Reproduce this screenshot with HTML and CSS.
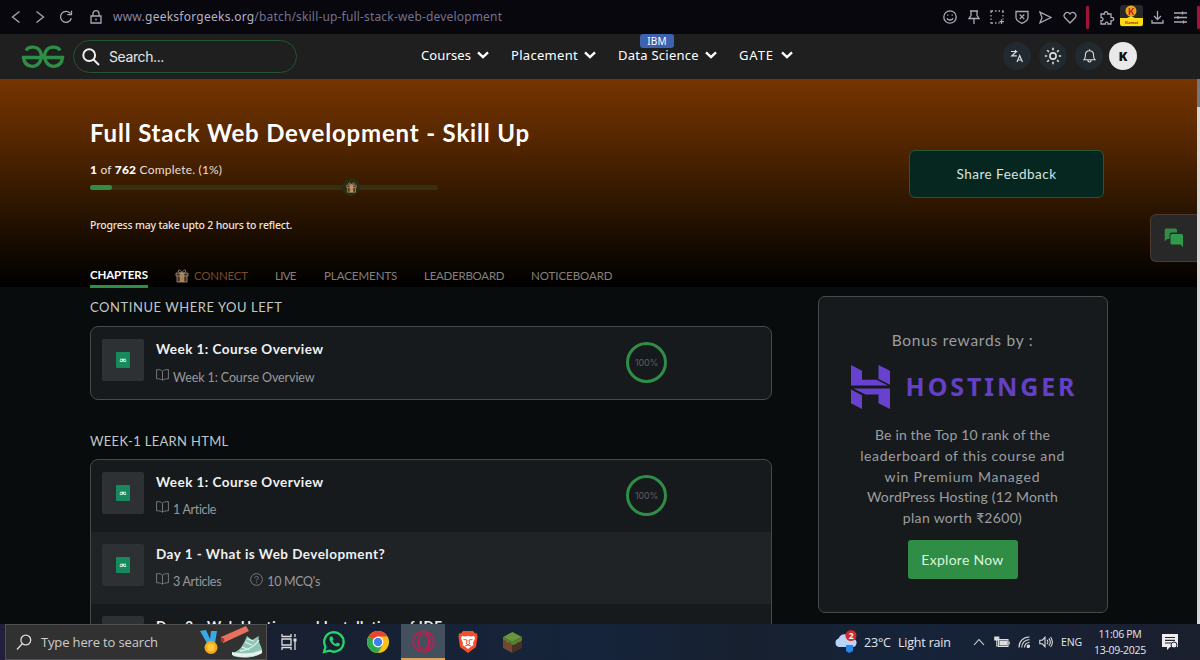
FILE: index.html
```html
<!DOCTYPE html>
<html lang="en">
<head>
<meta charset="utf-8">
<title>Full Stack Web Development - Skill Up</title>
<link rel="stylesheet" href="styles.css">
</head>
<body>
<svg width="0" height="0" class="defs" aria-hidden="true">
  <defs>
    <symbol id="chev" viewBox="0 0 12 8"><path d="M1 1.300 6 6l5-4.700" fill="none" stroke="#fff" stroke-width="2.400"/></symbol>
    <symbol id="book" viewBox="0 0 13 12"><path d="M6.500 2.200C5.500 1 3.500.6.600.6v9.200c2.900 0 4.900.3 5.900 1.500 1-1.200 3-1.500 5.900-1.500V.6C9.500.6 7.500 1 6.500 2.200zv9" fill="none" stroke="#74787a" stroke-width="1"/></symbol>
    <symbol id="gift" viewBox="0 0 14 14"><path d="M1 4h12v3H1zM2 7h10v6H2z" fill="#4a3522"/><path d="M5.200 4h3.600v9H5.200z" fill="#c98b4a"/><path d="M1 4h12v3H1zM2 7v6h10V7M5.200 4v9M8.800 4v9M7 4C5 4 3 3.500 3.200 2 3.500.4 6 .6 7 4c1-3.400 3.500-3.600 3.800-2C11 3.500 9 4 7 4z" fill="none" stroke="#b9a48d" stroke-width=".8"/></symbol>
    <symbol id="gfgbook" viewBox="0 0 14 16"><rect width="14" height="16" rx="1" fill="#178a5d"/><path d="M4 7.300h2.600v.8a1.300 1.300 0 0 1-2.600.3M10 7.300H7.400v.8a1.300 1.300 0 0 0 2.600.3" fill="none" stroke="#d5f2e4" stroke-width="1.100"/></symbol>
  </defs>
</svg>
<div class="screen">
  <header class="browser">
    <div class="browser-nav">
      <svg width="10" height="14" viewBox="0 0 10 14"><path d="M8.500 1.500 1.500 7l7 5.500"/></svg>
      <svg width="10" height="14" viewBox="0 0 10 14"><path d="m1.500 1.500 7 5.500-7 5.500"/></svg>
      <svg width="14" height="14" viewBox="0 0 14 14"><path d="M12.300 8.300A5.500 5.500 0 1 1 11.500 3.600M12.500.7v4H8.300"/></svg>
      <svg class="lock" width="12" height="14" viewBox="0 0 12 14"><path d="M1 6h10v7H1zM3 6V3.700a3 3 0 0 1 6 0V6M6 8.500v2"/></svg>
    </div>
    <div class="url"><span class="host">www.<b>geeksforgeeks.org</b></span>/batch/skill-up-full-stack-web-development</div>
    <div class="browser-tools">
      <svg width="14" height="14" viewBox="0 0 14 14"><circle cx="7" cy="7" r="6.200"/><path d="M4 8.200c.8 2.400 5.200 2.400 6 0M4.800 4.500v1.300M9.200 4.500v1.300"/></svg>
      <svg width="12" height="14" viewBox="0 0 12 14"><path d="M2 1h8M3 1v4.500L1 8.500h10L9 5.500V1M6 8.500V14"/></svg>
      <svg width="14" height="14" viewBox="0 0 14 14"><path d="M1 3V1h2M5 1h1.500M8.500 1H10M12 1h1v2M13 5v1.500M13 8.500v1M1 5v1.500M1 8.500V10M1 12v1h2M5 13h1.500M8.500 13h1M11.500 9.500v4.500M9.500 11.700H14"/></svg>
      <svg width="14" height="14" viewBox="0 0 14 14"><path d="M1 1.500h12v6.300c0 2.500-3 4.200-6 5.500C4 12 1 10.300 1 7.800zM4.700 4.500l4.600 4.600M9.300 4.500 4.700 9.100"/></svg>
      <svg width="13" height="13" viewBox="0 0 13 13"><path d="m1 1.200 11 5.300-11 5.300 2-5.300z"/></svg>
      <svg width="14" height="13" viewBox="0 0 14 13"><path d="M7 12 1.900 6.800C-.6 3.700 3.600-1 7 3c3.400-4 7.600.7 5.100 3.800z"/></svg>
      <i class="mark"></i>
      <svg width="16" height="15" viewBox="0 0 16 15"><path d="M2 4h3.500C4.500 1 9.500 1 8.600 4H12v3.500c3.500-.7 3.500 4 0 3.200V14H9c.5-2.500-3-2.500-2.600 0H2v-3.300c2.700.2 2.700-3.400 0-3.200z"/></svg>
      <svg class="ext" width="23" height="22" viewBox="0 0 23 22"><rect width="23" height="22" rx="3" fill="#252a2b"/><circle cx="11" cy="6" r="5.500" fill="#efa51b"/><path d="M0 13h7l4-2 4 2h8v6a2 2 0 0 1-2 2H2a2 2 0 0 1-2-2z" fill="#ffdc12"/><text x="8" y="9.500" class="ext-k">K</text><text x="5" y="18.500" class="ext-s">Kamat</text></svg>
      <svg width="13" height="14" viewBox="0 0 13 14"><path d="M6.500 1v8M3 6l3.500 3.500L10 6M1 10v3h11v-3"/></svg>
      <svg width="13" height="13" viewBox="0 0 13 13"><path d="M0 2h13M0 6.500h13M0 11h13M8.500.5v3M4 5v3M9.500 9.500v3"/></svg>
      <i class="mark edge"></i>
    </div>
  </header>

  <nav class="topnav">
    <svg class="logo" width="44" height="24" viewBox="0 0 44 24"><path d="M5 5.500C7.500 1 16.500.7 19.500 7c1.400 3 1 6 0 8.500C15.500 24.500 3.500 22.500 2.500 12.500H41.500C40.500 22.500 28.500 24.500 24.500 15.500c-1-2.500-1.400-5.500 0-8.500 3-6.300 12-6 14.500-1.500" fill="none" stroke="#2f8d46" stroke-width="3.300"/></svg>
    <div class="search">
      <svg width="18" height="18" viewBox="0 0 18 18"><circle cx="7.200" cy="7.200" r="5.900" fill="none" stroke="#eee" stroke-width="2"/><path d="m11.500 11.500 5.500 5.500" stroke="#eee" stroke-width="2"/></svg>
      <span>Search...</span>
    </div>
    <div class="menu">
      <a class="courses">Courses <svg width="12" height="8"><use href="#chev"/></svg></a>
      <a class="placement">Placement <svg width="12" height="8"><use href="#chev"/></svg></a>
      <a class="science">Data Science <svg width="12" height="8"><use href="#chev"/></svg><span class="ibm">IBM</span></a>
      <a class="gate">GATE <svg width="12" height="8"><use href="#chev"/></svg></a>
    </div>
    <div class="actions">
      <span class="round"><svg width="14" height="14" viewBox="0 0 14 14"><path d="M1 2.500h5.500L1.800 6.800h5M5.500 1v1.500" stroke-width="1.200"/><path d="m7 13 2.700-6.500L12.500 13M8 11h3.700" stroke-width="1.200"/></svg></span>
      <span class="round"><svg width="18" height="18" viewBox="0 0 18 18"><circle cx="9" cy="9" r="3.100" stroke-width="1.600"/><path stroke-width="1.600" d="M9 .8v2.400M9 14.800v2.400M.8 9h2.400M14.800 9h2.400M3.200 3.200l1.700 1.700M13.100 13.100l1.700 1.700M3.200 14.800l1.700-1.700M13.100 4.900l1.700-1.700"/></svg></span>
      <span class="round"><svg width="13" height="14" viewBox="0 0 13 14"><path d="M1 10.800c1.500-1.200 1.500-3 1.500-5C2.500 3.500 4 1.700 6.500 1.700s4 1.800 4 4.100c0 2 0 3.800 1.500 5zM6.500.3v1.400M4.800 11c0 2.600 3.400 2.600 3.400 0"/></svg></span>
      <span class="round avatar">K</span>
    </div>
  </nav>

  <main class="page">
    <div class="content">
      <section class="hero">
        <div class="intro">
          <h1>Full Stack Web Development - Skill Up</h1>
          <p class="count"><b>1</b> of <b>762</b> Complete. (1%)</p>
          <div class="bar"><div class="fill"></div><span class="goal"><svg width="11" height="11"><use href="#gift"/></svg></span></div>
          <p class="note">Progress may take upto 2 hours to reflect.</p>
          <div class="tabs">
            <span class="tab active">CHAPTERS</span>
            <span class="tab connect"><svg width="14" height="14"><use href="#gift"/></svg>CONNECT</span>
            <span class="tab live">LIVE</span>
            <span class="tab placements">PLACEMENTS</span>
            <span class="tab leader">LEADERBOARD</span>
            <span class="tab">NOTICEBOARD</span>
          </div>
        </div>
        <button class="feedback">Share Feedback</button>
        <div class="chat"><svg width="20" height="20" viewBox="0 0 20 20"><path d="M2 .5h9.500a1.500 1.500 0 0 1 1.500 1.500v2.500H8A2.500 2.500 0 0 0 5.500 7v4H3.500L.7 13.500V2A1.500 1.500 0 0 1 2 .5z" fill="#2f8d46"/><path d="M8 6h9.500A1.500 1.500 0 0 1 19 7.500V19l-2.500-2.500H8A1.500 1.500 0 0 1 6.500 15V7.500A1.500 1.500 0 0 1 8 6z" fill="#2f9a4b"/></svg></div>
      </section>
      <div class="columns">
        <div class="chapters">
          <h2 class="resume">CONTINUE WHERE YOU LEFT</h2>
          <div class="card single">
            <div class="row">
              <span class="thumb"><svg width="14" height="16"><use href="#gfgbook"/></svg></span>
              <div class="info"><h3>Week 1: Course Overview</h3><div class="meta"><span class="full"><svg width="13" height="12"><use href="#book"/></svg>Week 1: Course Overview</span></div></div>
              <span class="ring">100%</span>
            </div>
          </div>
          <h2 class="week">WEEK-1 LEARN HTML</h2>
          <div class="card list">
            <div class="row">
              <span class="thumb"><svg width="14" height="16"><use href="#gfgbook"/></svg></span>
              <div class="info"><h3>Week 1: Course Overview</h3><div class="meta"><span><svg width="13" height="12"><use href="#book"/></svg>1 Article</span></div></div>
              <span class="ring">100%</span>
            </div>
            <div class="row alt">
              <span class="thumb"><svg width="14" height="16"><use href="#gfgbook"/></svg></span>
              <div class="info"><h3>Day 1 - What is Web Development?</h3><div class="meta"><span><svg width="13" height="12"><use href="#book"/></svg>3 Articles</span><span class="mcq"><svg width="13" height="13" viewBox="0 0 13 13"><circle cx="6.500" cy="6.500" r="5.900" fill="none" stroke="#74787a"/><path d="M4.700 5c.2-2.300 3.900-2.100 3.700 0-.1 1.200-1.900 1.200-1.900 2.600M6.500 8.800v1.100" fill="none" stroke="#74787a"/></svg>10 MCQ's</span></div></div>
            </div>
            <div class="row">
              <span class="thumb"><svg width="14" height="16"><use href="#gfgbook"/></svg></span>
              <div class="info"><h3 class="wide">Day 2 - Web Hosting and Installation of IDE</h3></div>
            </div>
          </div>
        </div>
        <aside class="promo">
          <p class="bonus">Bonus rewards by :</p>
          <div class="brand">
            <svg width="39" height="44" viewBox="0 0 39 44"><path d="M0 0l11 5.800v8.900h14.500L37 20.500H0zM27.500 0 39 5.800v14L27.500 14zM2.500 23.500H39V44l-11.500-5.800V29.500H14.500zM0 24.500l11 5.700V44L0 38.200z" fill="#6841cf"/></svg>
            <span>HOSTINGER</span>
          </div>
          <p class="pitch"><span class="l1">Be in the Top 10 rank of the</span><span class="l2">leaderboard of this course and</span><span class="l3">win Premium Managed</span><span class="l1">WordPress Hosting (12 Month</span><span class="l5">plan worth ₹2600)</span></p>
          <button class="explore">Explore Now</button>
        </aside>
      </div>
    </div>
    <div class="scrollbar"><div class="handle"></div></div>
  </main>

  <footer class="taskbar">
    <div class="find">
      <svg width="16" height="17" viewBox="0 0 16 17"><circle cx="9.800" cy="6" r="4.900" fill="none" stroke="#ddd" stroke-width="1.300"/><path d="M6.200 9.800 1 15.500" stroke="#ddd" stroke-width="1.300"/></svg>
      <span>Type here to search</span>
      <svg class="art" width="64" height="32" viewBox="0 0 64 32"><path d="M1 5l6-1 4 9 1-8 6 0-2 12-7 2z" fill="#39a9e8"/><circle cx="12" cy="21.500" r="6.500" fill="#f6a915"/><circle cx="12" cy="21.500" r="3.800" fill="#ffc83d"/><path d="M22 11 47 0l3 5-26 12z" fill="#e9705c"/><circle cx="23.500" cy="14" r="2" fill="#a8322e"/><path d="M34 27c8-3 10-8 14-17l5 4 7-4c-2 7 4 10 3 17-7 5-20 6-29 3z" fill="#8bc6b7"/><path d="M33 26c9 2 20 2 30-2v3c-8 5-22 5-30 2z" fill="#e8efec"/><path d="m43 21 7 3m-4-8 7 3m-5-6 7 2M41 25c8-1 15-5 19-11" stroke="#e0f0eb" stroke-width="1.300" fill="none"/></svg>
    </div>
    <div class="apps">
      <span><svg width="16" height="16" viewBox="0 0 16 16" fill="none" stroke="#ddd" stroke-width="1.300"><path d="M1 0v2.500h9V0M1 5h9v6H1zM1 16v-2.500h9V16M14 0v3M14 7v9"/><path d="M12.500 4.500h3v3h-3z" fill="#ddd" stroke="none"/></svg></span>
      <span><svg width="24" height="24" viewBox="0 0 24 24"><path d="M2 22 3.500 16.800A9.700 9.700 0 1 1 7.500 20.600z" fill="none" stroke="#25d366" stroke-width="2.300"/><path d="M8.500 6.500c-4 3 4 12 8.500 9.500 1-.6 1-2 .5-2.400l-2.300-1.200-1.500 1.500c-1.500-.7-2.700-2-3.300-3.200l1.100-1.300-1-2.500c-.3-.6-1.300-.6-2-.4z" fill="#25d366"/></svg></span>
      <span><svg width="22" height="22" viewBox="0 0 22 22"><circle cx="11" cy="11" r="11" fill="#fbc116"/><path d="M11 11 1.500 5.500A11 11 0 0 1 20.500 5.500H11z" fill="#e94335"/><path d="M1.500 5.500A11 11 0 0 0 11 22l4.700-8.300L11 11z" fill="#2da94f"/><circle cx="11" cy="11" r="5.400" fill="#fff"/><circle cx="11" cy="11" r="4.200" fill="#3f80ee"/></svg></span>
      <span class="open"><svg width="23" height="23" viewBox="0 0 23 23" fill="none" stroke="#c8194f" stroke-width="1.600"><circle cx="11.500" cy="11.500" r="10.300"/><ellipse cx="11.500" cy="11.500" rx="5" ry="8.300"/><path d="M14 3.500c5 1 5 15 0 16"/></svg></span>
      <span><svg width="20" height="22" viewBox="0 0 20 22"><path d="M5 0h10l2 2.300 2 .2.500 3L18 16l-8 6-8-6L.5 5.500l.5-3 2-.2z" fill="#f5502c"/><path d="m4 5 3 .5L10 5l3 .5 3-.5 1 2-2 5 .5 2-3 2-2.500 2-2.500-2-3-2 .5-2-2-5z" fill="#fff"/><path d="M5.500 8.500 9 9l-.5 4L10 14l1.500-1L11 9l3.500-.5M7 15l3-1 3 1" stroke="#f5502c" stroke-width="1" fill="none"/></svg></span>
      <span><svg width="19" height="21" viewBox="0 0 19 21"><path d="m9.500 0 9.500 5-9.500 5L0 5z" fill="#69963b"/><path d="M0 5l9.500 5v11L0 16z" fill="#70492f"/><path d="m19 5-9.500 5v11l9.500-5z" fill="#4c3020"/><path d="M0 5l9.500 5L19 5v3l-2 2-2 0-2 2-3.500 1-3-3-2 1-2-3L0 8z" fill="#54822f"/></svg></span>
    </div>
    <div class="weather">
      <svg width="24" height="24" viewBox="0 0 24 24"><path d="M4.500 17a4.500 4.500 0 0 1 0-8.500C7 2.500 14 3 15.500 8 21 7.500 24 11 22 15c-1 2-3 2-4 2z" fill="#b9d4f5"/><path d="M12 15h7v6l-4 2-3-2z" fill="#2786ec"/><circle cx="17" cy="5.500" r="5.500" fill="#cf2b28"/><text x="14.700" y="9" class="badge">2</text></svg>
      <span class="temp">23°C</span><span class="rain">Light rain</span>
    </div>
    <div class="tray">
      <svg width="12" height="8" viewBox="0 0 12 8"><path d="m1 7 5-5.500L11 7"/></svg>
      <svg width="16" height="12" viewBox="0 0 16 12"><path d="M4.500 3.500H14v7H4.500z"/><path d="M6 5h7v4H6zM.8 1h4v3h-4z" fill="#ddd"/><path d="M2.800 4v6h2M15.200 5.500v3"/></svg>
      <svg width="12" height="12" viewBox="0 0 12 12" stroke-width="1"><path d="M1 11.500C.8 5.500 5.500.8 11.500 1M3.800 11.500c-.2-4.500 3.200-7.900 7.700-7.700M6.500 11.500c0-2.800 2-5 5-5"/><circle cx="10.300" cy="10.300" r="1.200" fill="#ddd"/></svg>
      <svg width="14" height="12" viewBox="0 0 14 12"><path d="M.8 4.200h2.500L6 1.300v9.400L3.300 7.800H.8zM8 4c1 1 1 3 0 4M9.800 2.500c2 2 2 5 0 7M11.500 1c2.500 2.800 2.500 7.200 0 10"/></svg>
      <span class="lang">ENG</span>
    </div>
    <div class="clock"><span class="time">11:06 PM</span><span class="date">13-09-2025</span></div>
    <svg class="notice" width="16" height="16" viewBox="0 0 16 16"><path d="M0 0h16v13H8l-3 3v-3H0z" fill="#eee"/><path d="M3 3.500h10M3 6.300h10M3 9h6" stroke="#20242f" stroke-width="1.200"/><circle cx="12" cy="11" r="3" fill="#eee" stroke="#20242f"/></svg>
  </footer>
</div>
</body>
</html>
```
FILE: styles.css
```css
* { box-sizing: border-box; }
body { margin: 0; background: #080c0d; font-family: Lato, sans-serif; color: #fff; }
.defs { position: absolute; }
h1, h2, h3, p { margin: 0; }
button { font-family: inherit; color: inherit; padding: 0; }
svg { display: block; flex: none; }
.screen { width: 1200px; height: 660px; overflow: hidden; display: grid; grid-template-rows: 34px 45px 545px 36px; }

.browser { background: #07070d; display: flex; align-items: center; }
.browser svg { fill: none; stroke: #aaa7b8; stroke-width: 1.300; }
.browser-nav { display: flex; align-items: center; gap: 14px; padding-left: 12px; width: 113px; flex: none; }
.browser-nav svg { margin-left: -1px; margin-right: 1px; }
.browser-nav .lock { margin-left: 2px; }
.url { width: 830px; font: 12px/20px "Noto Sans", sans-serif; color: #74708e; letter-spacing: .17px; }
.url .host { color: #8884a0; letter-spacing: .25px; }
.url b { font-weight: 400; color: #b4b1c5; }
.browser-tools { flex: 1; display: flex; align-items: center; justify-content: space-between; height: 34px; }
.browser-tools .ext { stroke: none; margin: -2px -3px 0 -5px; }
.ext-k { font: 900 9px Lato, sans-serif; fill: #c4171c; }
.ext-s { font: 900 4.500px Lato, sans-serif; fill: #b02b16; }
.mark { width: 3px; height: 23px; border-radius: 1px; background: #a3123b; margin: 0 -1px; }
.mark.edge { margin-right: 0; }

.topnav { background: #1f1f1f; display: flex; align-items: center; padding-left: 21px; }
.search { width: 224px; height: 33px; margin-left: 8px; border: 1px solid #24552f; border-radius: 17px; display: flex; align-items: center; gap: 9px; padding-left: 8px; font: 14px Inter, sans-serif; letter-spacing: -.4px; color: #e6e6e6; }
.menu { display: flex; margin-left: 124px; margin-top: -3px; width: 582px; font: 400 13px/20px "Noto Sans", sans-serif; color: #fff; }
.menu a { display: flex; justify-content: space-between; align-items: center; position: relative; }
.courses { width: 68px; margin-right: 22px; letter-spacing: .1px; }
.placement { width: 85px; margin-right: 22px; letter-spacing: .3px; }
.science { width: 99px; margin-right: 22px; letter-spacing: .25px; }
.gate { width: 54px; letter-spacing: .9px; }
.ibm { position: absolute; left: 22px; top: -11px; width: 34px; height: 14px; border-radius: 3px; background: #3c62b0; font-size: 10px; line-height: 14px; text-align: center; letter-spacing: .2px; }
.actions { display: flex; gap: 8px; margin-top: -1px; }
.round { width: 28px; height: 28px; border-radius: 50%; background: #222a2f; display: flex; align-items: center; justify-content: center; }
.round svg { fill: none; stroke: #ddd; stroke-width: 1.100; }
.avatar { background: #e9e9e9; color: #111; font: 800 13px "Open Sans", sans-serif; margin-left: -2px; }

.page { display: grid; grid-template-columns: 1197px 3px; overflow: hidden; }
.content { overflow: hidden; }
.scrollbar { background: #d8d8d8; }
.handle { height: 28px; background: #777; }
.hero { position: relative; height: 208px; background: linear-gradient(180deg, #763500 0%, #542600 30%, #301700 58%, #100800 85%, #000 100%); display: flex; align-items: flex-start; padding: 38px 0 0 90px; }
.intro { width: 819px; flex: none; }
h1 { font-size: 24px; line-height: 32px; letter-spacing: .82px; font-weight: 700; }
.count { margin-top: 11px; font-size: 12px; line-height: 20px; letter-spacing: .2px; color: #eadfd5; }
.count b { color: #fff; font-weight: 900; }
.bar { position: relative; margin-top: 5px; width: 348px; height: 5px; border-radius: 3px; background: #37300f; }
.fill { width: 22px; height: 5px; border-radius: 3px; background: #2f8d46; }
.goal { position: absolute; left: 252px; top: -7px; width: 18px; height: 18px; border-radius: 50%; background: #2d2c10; display: flex; align-items: center; justify-content: center; }
.note { margin-top: 26px; font: 500 10.500px/18px "Noto Sans", sans-serif; letter-spacing: -.2px; color: #eee3da; }
.tabs { display: flex; margin-top: 31px; font-size: 11.500px; line-height: 18px; color: #84807b; height: 23px; letter-spacing: -.05px; }
.tab { display: flex; align-items: center; flex: none; white-space: nowrap; height: 22px; }
.active { width: 58px; height: 23px; margin-right: 27px; color: #fff; font-weight: 700; letter-spacing: -.12px; border-bottom: 3px solid #2f8d46; padding-bottom: 1px; }
.connect { width: 100px; color: #85552a; gap: 5px; opacity: .9; letter-spacing: -.2px; }
.live { width: 49px; letter-spacing: -.75px; }
.placements { width: 100px; letter-spacing: -.05px; }
.leader { width: 107px; letter-spacing: -.25px; }
.feedback { margin-top: 33px; width: 195px; height: 48px; border: 1px solid #285737; border-radius: 6px; background: #06271f; font-size: 13.500px; letter-spacing: .5px; color: #d9e3df; }
.chat { position: absolute; right: 0; top: 135px; width: 47px; height: 48px; border: 1px solid #4c3a30; border-right: 0; border-radius: 6px 0 0 6px; background: #282828; display: flex; align-items: center; justify-content: center; }

.columns { display: grid; grid-template-columns: 682px 290px; column-gap: 45.500px; padding-left: 90px; }
h2 { font-size: 13px; line-height: 20px; font-weight: 400; color: #c3c6c7; }
.resume { margin-top: 10px; letter-spacing: .55px; }
.week { margin-top: 31px; letter-spacing: .32px; }
.card { border: 1px solid #474a4c; border-radius: 8px; background: #171a1d; overflow: hidden; }
.single { margin-top: 9px; height: 74px; }
.list { margin-top: 8px; height: 220px; }
.row { display: flex; height: 72px; padding: 12px 0 0 10.500px; }
.thumb { width: 42px; height: 42px; border-radius: 2px; background: #2e3134; display: flex; align-items: center; justify-content: center; margin-right: 12.500px; flex: none; }
.alt { background: #202326; }
.info { width: 470px; flex: none; }
h3 { font-size: 13.500px; line-height: 20px; font-weight: 700; letter-spacing: .46px; color: #f0f1f1; white-space: nowrap; }
.wide { letter-spacing: .6px; }
.meta { display: flex; margin-top: 8px; font-size: 12.500px; line-height: 20px; letter-spacing: -.32px; color: #96999b; }
.meta span { display: flex; gap: 4px; }
.meta svg { margin-top: 1px; }
.single .meta { margin-top: 9px; }
.meta .full { letter-spacing: -.1px; }
.meta .mcq { margin-left: 29px; }
.ring { width: 41px; height: 41px; margin-top: 3px; border: 3px solid #2f8d46; border-radius: 50%; display: flex; align-items: center; justify-content: center; font: 9px Inter, sans-serif; letter-spacing: -.2px; color: #5a5e60; }

.promo { margin-top: 9px; height: 317px; border: 1px solid #474a4c; border-radius: 7px; background: #171a1d; display: flex; flex-direction: column; align-items: center; color: #9b9ea0; }
.bonus { margin-top: 32px; font-size: 15.500px; line-height: 22px; letter-spacing: .73px; }
.brand { display: flex; align-items: center; gap: 16px; margin-top: 14px; }
.brand span { font: 700 25px/30px "Noto Sans", sans-serif; letter-spacing: 2.900px; margin: -2px -3px 0 0; color: #6440c4; }
.pitch { margin-top: 16px; font-size: 14px; line-height: 20.800px; text-align: center; }
.pitch span { display: block; }
.l1 { letter-spacing: .16px; }
.l2 { letter-spacing: .63px; }
.l3 { letter-spacing: .78px; }
.l5 { letter-spacing: .32px; }
.explore { margin-top: 11px; width: 110px; height: 39px; border: 0; border-radius: 3px; background: #2f8d46; font-size: 14px; letter-spacing: .28px; color: #d9f5df; }

.taskbar { background: linear-gradient(90deg, #211f3c 0, #182032 25%, #15243b 50%, #17202f 62%, #152339 75%, #1b1f2e 100%); display: flex; align-items: center; padding-left: 5px; font-family: "Open Sans", sans-serif; color: #e4e6ea; }
.find { width: 262px; height: 36px; background: #313132; border: 1px solid #515153; display: flex; align-items: center; padding-left: 10px; flex: none; }
.find span { width: 158px; margin-left: 9px; font-size: 13px; letter-spacing: -.15px; color: #ccc; }
.apps { display: flex; height: 36px; width: 562px; flex: none; }
.apps span { width: 44.600px; height: 36px; display: flex; align-items: center; justify-content: center; }
.apps .open { background: #43505e; border-bottom: 2px solid #dba15e; }
.weather { display: flex; align-items: center; width: 145px; margin-left: 5px; font-size: 12.500px; letter-spacing: -.2px; flex: none; }
.temp { margin-left: 6px; width: 34px; }
.badge { font: 700 8.500px "Open Sans", sans-serif; fill: #fff; }
.tray { display: flex; align-items: center; width: 108px; gap: 8.500px; margin-left: -6px; flex: none; }
.tray svg { fill: none; stroke: #ddd; stroke-width: 1.100; }
.lang { font-size: 10.500px; letter-spacing: -.1px; }
.clock { width: 54px; margin-left: 12px; display: flex; flex-direction: column; align-items: center; font-size: 10.500px; line-height: 16px; letter-spacing: -.3px; white-space: nowrap; flex: none; }
.notice { margin-left: 15px; }
```
